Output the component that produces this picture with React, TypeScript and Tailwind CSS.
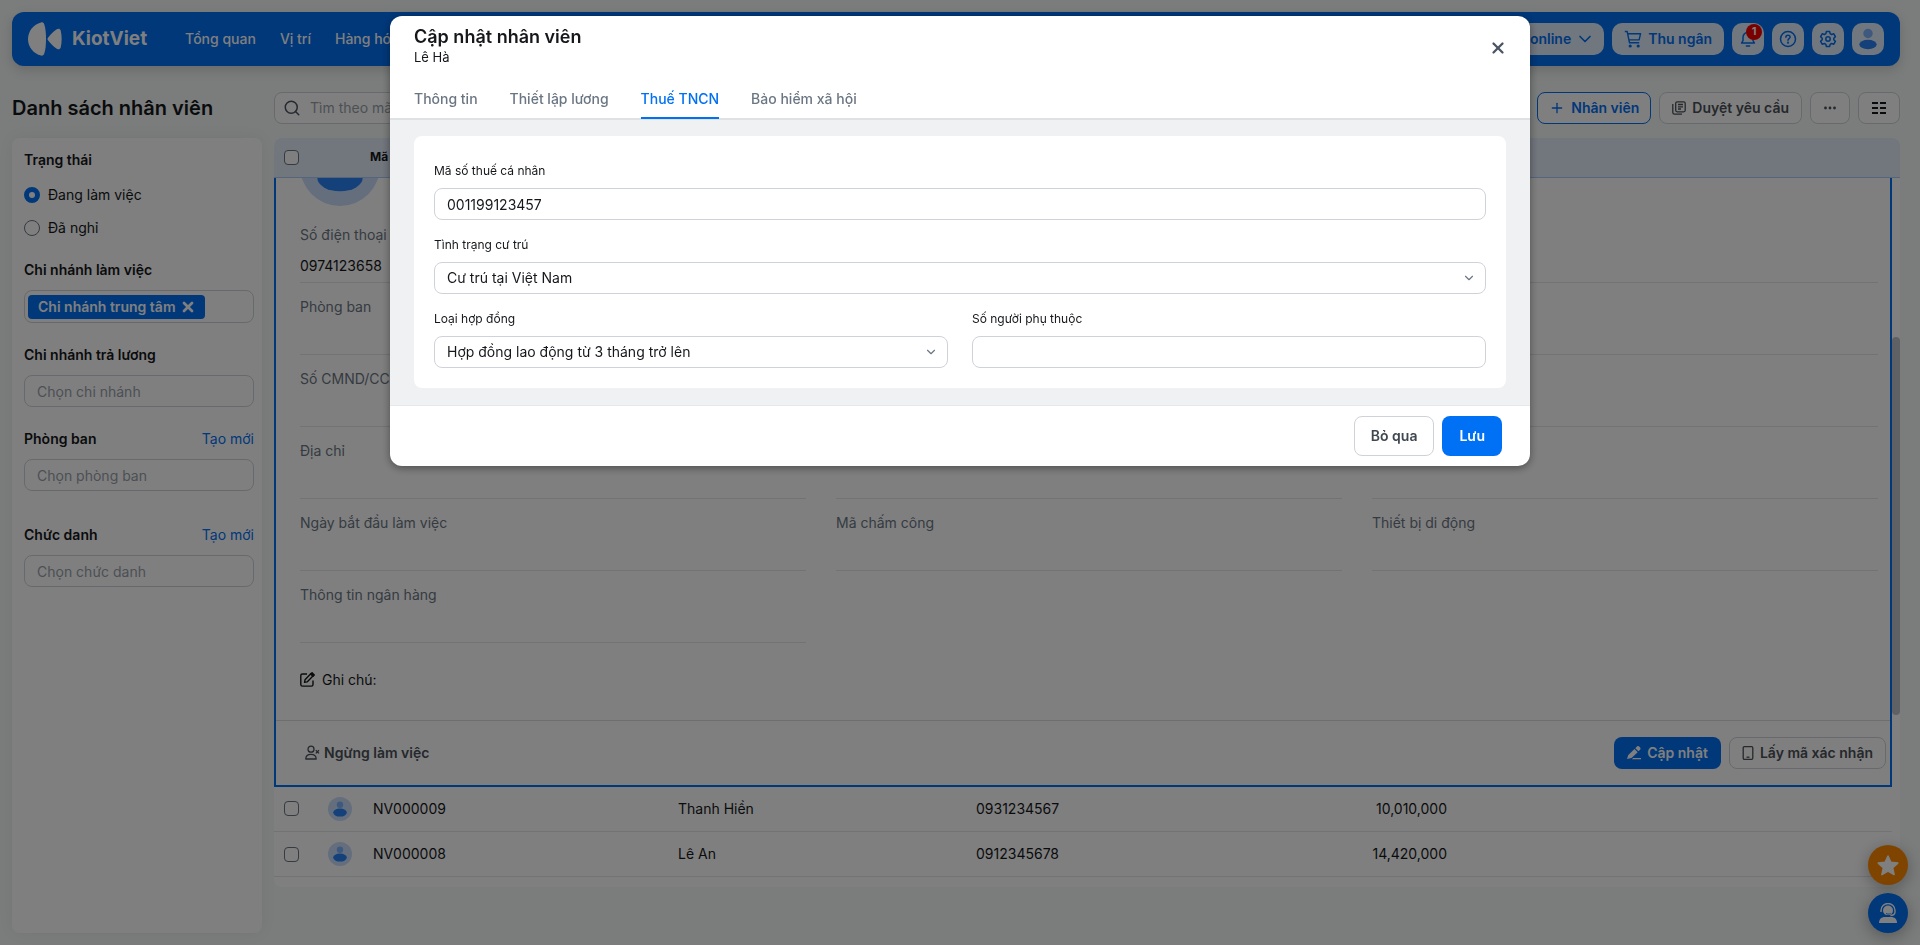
import React, { useState } from 'react';
import { Search, Plus, X, ChevronDown } from 'lucide-react';

interface Employee {
  id: string;
  name: string;
  phone: string;
  amount: string;
}

const EMPLOYEES: Employee[] = [
  { id: 'NV000009', name: 'Thanh Hiền', phone: '0931234567', amount: '10,010,000' },
  { id: 'NV000008', name: 'Lê An', phone: '0912345678', amount: '14,420,000' },
];

const NAV_ITEMS = ['Tổng quan', 'Vị trí', 'Hàng hóa'];
const TABS = ['Thông tin', 'Thiết lập lương', 'Thuế TNCN', 'Bảo hiểm xã hội'];

// Each row holds three cells, null leaves the cell out
const DETAIL_ROWS: ({ label: string; value?: string } | null)[][] = [
  [{ label: 'Số điện thoại', value: '0974123658' }, { label: '' }, { label: '' }],
  [{ label: 'Phòng ban' }, { label: '' }, { label: '' }],
  [{ label: 'Số CMND/CCCD' }, { label: '' }, { label: '' }],
  [{ label: 'Địa chỉ' }, { label: '' }, { label: '' }],
  [{ label: 'Ngày bắt đầu làm việc' }, { label: 'Mã chấm công' }, { label: 'Thiết bị di động' }],
  [{ label: 'Thông tin ngân hàng' }, null, null],
];

const Avatar: React.FC<{ className?: string }> = ({ className }) => (
  <svg viewBox="0 0 24 24" className={className} aria-hidden="true">
    <circle cx="12" cy="12" r="12" fill="#c9ddfb" />
    <circle cx="12" cy="7.8" r="3.2" fill="#7cb2fb" />
    <ellipse cx="12" cy="15.6" rx="6.8" ry="4" fill="#2a82f5" />
  </svg>
);

const Logo = () => (
  <div className="flex items-center gap-[10px] text-white">
    <svg viewBox="0 0 34 34" className="h-[34px] w-[34px]" fill="currentColor" aria-hidden="true">
      <path d="M13 .4C5.500 2.200 0 9 0 17s5.500 14.800 13 16.600c1.500.2 2.600-.3 3.200-1.800C17.500 28 18 23 18 17S17.500 6 16.200 2.200C15.600.7 14.500.2 13 .4Z" />
      <path d="M20.200 15.400c2.400-3.200 5.200-6 8.600-8.200 1.700-1 3.300-.6 3.900 1.200 1.300 5.800 1.300 11.400 0 17.200-.6 1.800-2.200 2.200-3.900 1.200-3.400-2.200-6.200-5-8.600-8.200-.9-1.300-.9-1.900 0-3.200Z" />
    </svg>
    <span className="text-[19px] font-bold">KiotViet</span>
  </div>
);

const CartIcon = () => (
  <svg viewBox="0 0 18 18" className="h-[18px] w-[18px]" fill="none" stroke="currentColor" strokeWidth="1.4" strokeLinejoin="round" aria-hidden="true">
    <path d="M.8 1.500h2.400l2.300 11.300h9.700M3.700 3.700h12.900l-1.500 6.200H5" />
    <circle cx="6.200" cy="16" r=".9" fill="currentColor" />
    <circle cx="14.200" cy="16" r=".9" fill="currentColor" />
  </svg>
);

const BellIcon = () => (
  <svg viewBox="0 0 18 18" className="h-[18px] w-[18px]" fill="none" stroke="currentColor" strokeWidth="1.500" strokeLinecap="round" strokeLinejoin="round" aria-hidden="true">
    <path d="M9 2.200a5 5 0 0 0-5 5v3.300l-1.400 2.600h12.800L14 10.500V7.200a5 5 0 0 0-5-5ZM7.400 16h3.200" />
  </svg>
);

const HelpIcon = () => (
  <svg viewBox="0 0 18 18" className="h-[18px] w-[18px]" fill="none" stroke="currentColor" strokeWidth="1.500" strokeLinecap="round" aria-hidden="true">
    <circle cx="9" cy="9" r="7.500" />
    <path d="M6.900 7.200c0-1.200.9-2 2.100-2s2.100.8 2.100 1.900c0 1.400-2.100 1.600-2.100 3.100" />
    <circle cx="9" cy="12.700" r=".4" fill="currentColor" />
  </svg>
);

const GearIcon = () => (
  <svg viewBox="0 0 18 18" className="h-[18px] w-[18px]" fill="none" stroke="currentColor" strokeWidth="1.500" strokeLinejoin="round" aria-hidden="true">
    <path d="M7.400 1.500h3.200l.6 2.200 1.300.8 2.300-.7 1.600 2.800-1.600 1.600v1.600l1.600 1.600-1.600 2.800-2.300-.7-1.300.8-.6 2.200H7.400l-.6-2.200-1.300-.8-2.300.7-1.600-2.800 1.600-1.600V8.200L1.600 6.600l1.600-2.800 2.300.7 1.300-.8Z" />
    <circle cx="9" cy="9" r="2.200" />
  </svg>
);

const RequestIcon = () => (
  <svg viewBox="0 0 14 14" className="h-[14px] w-[14px]" fill="none" stroke="currentColor" strokeWidth="1.300" strokeLinejoin="round" aria-hidden="true">
    <rect x="3.700" y=".8" width="9.500" height="10" rx="1.500" />
    <path d="M.8 3v8.500c0 1 .8 1.700 1.700 1.700H10M6 3.500h5M6 5.800h5M6 8h3" />
  </svg>
);

const NoteIcon = () => (
  <svg viewBox="0 0 15 15" className="h-[15px] w-[15px]" fill="none" stroke="currentColor" strokeWidth="1.400" strokeLinejoin="round" aria-hidden="true">
    <path d="M7 2H2.500C1.500 2 .8 2.700.8 3.600v8.800c0 1 .7 1.700 1.700 1.700h8.800c1 0 1.700-.7 1.700-1.700V8.500" />
    <path d="M5 7.800 11 1.500l2.200 2.200-6.100 6.200-2.600.5Z" />
    <path d="m10.600 2 1.500-1.300 2.200 2.200-1.400 1.400Z" fill="currentColor" />
  </svg>
);

const StopWorkIcon = () => (
  <svg viewBox="0 0 15 15" className="h-[15px] w-[15px]" fill="none" stroke="currentColor" strokeWidth="1.300" strokeLinejoin="round" aria-hidden="true">
    <circle cx="6" cy="4.200" r="3" />
    <path d="M.8 14c0-3.200 2-4.600 5.200-4.600s5.200 1.400 5.200 4.600ZM10.800 5.200l3.200 3.200M14 5.200l-3.200 3.200" />
  </svg>
);

const PencilIcon = () => (
  <svg viewBox="0 0 14 14" className="h-[14px] w-[14px]" fill="currentColor" aria-hidden="true">
    <path d="M8.300 2.200 10 .6c.7-.7 1.600-.6 2.200 0l.9.9c.6.6.6 1.500 0 2.200l-1.600 1.600ZM7.500 3l3.200 3.200-6.200 5.900-4.500 1 1.300-4.200ZM6 12h8v1.300H5Z" />
  </svg>
);

const PhoneIcon = () => (
  <svg viewBox="0 0 12 14" className="h-[14px] w-3" fill="none" stroke="currentColor" strokeWidth="1.300" aria-hidden="true">
    <rect x="1.200" y=".7" width="9.600" height="12.600" rx="1.200" />
    <path d="M4.500 11.200h3" />
  </svg>
);

const SupportIcon = () => (
  <svg viewBox="0 0 20 20" className="h-5 w-5" aria-hidden="true">
    <path d="M1 20c0-4 2.500-6 6-6h6c3.500 0 6 2 6 6Z" fill="white" />
    <circle cx="10" cy="7.500" r="5" fill="white" />
    <path d="M3 9V7.500a7 7 0 0 1 14 0V9c0 2.500-2 3.500-5 3.500" fill="none" stroke="white" strokeWidth="1.400" />
    <path d="M8 10.500c1.500.8 3 .8 4.500 0M8.500 12.500h4" fill="none" stroke="#0070f4" strokeWidth=".9" />
  </svg>
);

const checkboxClass =
  'block h-[15px] w-[15px] appearance-none rounded-[4px] border border-[#6b7683] bg-white checked:bg-[#0070f4]';
const headerButton =
  'relative flex h-8 items-center justify-center rounded-[10px] bg-[#e3eefd] text-sm font-semibold text-[#0070f4]';
const toolButton =
  'flex h-8 items-center justify-center gap-[6px] rounded-lg border border-[#cfd3d8] bg-white text-sm font-semibold text-[#4b5158]';
const modalField =
  'block h-8 w-full appearance-none rounded-lg border border-[#cfd2d8] bg-white px-3 text-sm text-[#15171a]';

const Header = () => (
  <header className="flex h-[54px] items-center justify-between rounded-xl bg-[#0070f4] px-4 shadow-[0_4px_12px_rgba(0,0,0,0.15)]">
    <div className="flex items-center gap-[38px]">
      <Logo />
      <nav className="flex gap-6">
        {NAV_ITEMS.map((item) => (
          <a key={item} href="#" className="text-sm font-medium text-white">
            {item}
          </a>
        ))}
      </nav>
    </div>
    <div className="flex gap-2">
      <button className={`${headerButton} gap-1 pr-[9px] pl-[14px]`}>
        Bán online
        <ChevronDown size={20} />
      </button>
      <button className={`${headerButton} gap-[6px] px-3`}>
        <CartIcon />
        Thu ngân
      </button>
      <button className={`${headerButton} w-8`} aria-label="Thông báo">
        <BellIcon />
        <span className="absolute top-px right-[2px] flex h-4 w-4 items-center justify-center rounded-full bg-[#f50000] text-[11px] font-bold text-white">
          1
        </span>
      </button>
      <button className={`${headerButton} w-8`} aria-label="Trợ giúp">
        <HelpIcon />
      </button>
      <button className={`${headerButton} w-8`} aria-label="Thiết lập">
        <GearIcon />
      </button>
      <button className={`${headerButton} w-8 overflow-hidden`} aria-label="Tài khoản">
        <svg viewBox="0 0 32 32" className="h-8 w-8" aria-hidden="true">
          <circle cx="16" cy="10.500" r="4.700" fill="#7cb2fb" />
          <ellipse cx="16" cy="21.500" rx="8.700" ry="4.700" fill="#2a82f5" />
        </svg>
      </button>
    </div>
  </header>
);

interface FilterProps {
  id: string;
  title: string;
  placeholder: string;
  canCreate?: boolean;
}

const Filter: React.FC<FilterProps> = ({ id, title, placeholder, canCreate }) => (
  <div>
    <div className="flex items-center justify-between text-sm leading-5">
      <label htmlFor={id} className="font-semibold text-[#15171a]">
        {title}
      </label>
      {canCreate && (
        <a href="#" className="text-[#0070f4]">
          Tạo mới
        </a>
      )}
    </div>
    <input
      id={id}
      placeholder={placeholder}
      className="mt-[10px] block h-8 w-full rounded-lg border border-[#cfd3d8] bg-white px-3 text-sm placeholder:text-[#98a1ab]"
    />
  </div>
);

const Sidebar = () => {
  const [status, setStatus] = useState('Đang làm việc');

  return (
    <aside className="flex w-[250px] shrink-0 flex-col rounded-lg bg-white pt-3 pr-2 pl-3 shadow-[0_0_16px_rgba(0,0,0,0.06)]">
      <fieldset>
        <legend className="text-sm leading-5 font-semibold text-[#15171a]">Trạng thái</legend>
        <div className="mt-[15px] flex flex-col gap-[13px]">
          {['Đang làm việc', 'Đã nghỉ'].map((item) => (
            <label key={item} className="flex items-center gap-2 text-sm leading-5 text-[#15171a]">
              <input
                type="radio"
                name="status"
                checked={status === item}
                onChange={() => setStatus(item)}
                className="h-4 w-4 appearance-none rounded-full border border-[#6b7683] checked:border-[5px] checked:border-[#0070f4]"
              />
              {item}
            </label>
          ))}
        </div>
      </fieldset>

      <div className="mt-[22px]">
        <h3 className="text-sm leading-5 font-semibold text-[#15171a]">Chi nhánh làm việc</h3>
        <div className="mt-[10px] flex h-[33px] items-center rounded-lg border border-[#cfd3d8] px-[3px]">
          <span className="flex h-6 items-center gap-1 rounded bg-[#0070f4] pr-[9px] pl-[10px] text-sm font-semibold text-white">
            Chi nhánh trung tâm
            <button aria-label="Xóa chi nhánh">
              <X size={16} strokeWidth={4} />
            </button>
          </span>
        </div>
      </div>

      <div className="mt-[22px]">
        <Filter id="pay-branch" title="Chi nhánh trả lương" placeholder="Chọn chi nhánh" />
      </div>
      <div className="mt-[22px]">
        <Filter id="department" title="Phòng ban" placeholder="Chọn phòng ban" canCreate />
      </div>
      <div className="mt-[34px]">
        <Filter id="position" title="Chức danh" placeholder="Chọn chức danh" canCreate />
      </div>
    </aside>
  );
};

const EmployeeDetail = () => (
  <div className="overflow-hidden border-2 border-t-0 border-[#0070f4] bg-white">
    {/* Scrolled profile block, only the lower edge of the avatar shows */}
    <div className="flex h-7 items-end overflow-hidden pl-6">
      <Avatar className="h-20 w-20 shrink-0" />
    </div>
    <div className="pt-[5px] pr-3 pl-6">
      {DETAIL_ROWS.map((row, index) => (
        <dl key={index} className="grid grid-cols-3 gap-x-[30px]">
          {row.map((cell, column) =>
            cell ? (
              <div key={column} className="h-[72px] border-b border-[#e4e6e9] pt-[14px] text-sm leading-5">
                <dt className="h-5 text-[#6b7683]">{cell.label}</dt>
                {cell.value && <dd className="mt-[11px] text-[#15171a]">{cell.value}</dd>}
              </div>
            ) : (
              <div key={column} />
            )
          )}
        </dl>
      ))}
      <p className="flex items-center gap-[7px] pt-[27px] pb-[30px] text-sm leading-5 text-[#15171a]">
        <NoteIcon />
        Ghi chú:
      </p>
    </div>
    <div className="flex h-[65px] items-center justify-between border-t border-[#d9dce0] pr-1 pl-[29px]">
      <button className="flex items-center gap-1 text-sm font-semibold text-[#4b5158]">
        <StopWorkIcon />
        Ngừng làm việc
      </button>
      <div className="flex gap-2">
        <button className="flex h-8 items-center gap-[6px] rounded-lg bg-[#0070f4] px-[13px] text-sm font-semibold text-white">
          <PencilIcon />
          Cập nhật
        </button>
        <button className={`${toolButton} px-3`}>
          <PhoneIcon />
          Lấy mã xác nhận
        </button>
      </div>
    </div>
  </div>
);

const EmployeeTable = () => (
  <div className="relative overflow-hidden rounded-lg bg-white pb-[10px]">
    <table className="w-full table-fixed border-collapse text-left text-sm text-[#15171a]">
      <colgroup>
        <col className="w-[44px]" />
        <col className="w-[45px]" />
        <col className="w-[305px]" />
        <col className="w-[298px]" />
        <col className="w-[298px]" />
        <col className="w-[193px]" />
        <col />
        <col className="w-2" />
      </colgroup>
      <thead>
        <tr className="h-[39px] border-b border-[#a9cbfa] bg-[#e4ecfb] text-xs">
          <th className="pl-[10px]">
            <input type="checkbox" aria-label="Chọn tất cả" className={checkboxClass} />
          </th>
          <th />
          <th className="pl-[7px] font-bold">Mã nhân viên</th>
          <th className="pl-[10px] font-bold">Tên nhân viên</th>
          <th className="pl-[10px] font-bold">Số điện thoại</th>
          <th />
          <th />
          <th />
        </tr>
      </thead>
      <tbody>
        <tr>
          <td colSpan={7}>
            <EmployeeDetail />
          </td>
          <td />
        </tr>
        {EMPLOYEES.map((employee) => (
          <tr key={employee.id} className="h-[45px] *:border-b *:border-[#e4e6e9] *:last:border-b-0">
            <td className="pl-[10px]">
              <input type="checkbox" aria-label={employee.id} className={checkboxClass} />
            </td>
            <td className="pl-[10px]">
              <Avatar className="h-6 w-6" />
            </td>
            <td className="pl-[10px]">{employee.id}</td>
            <td className="pl-[10px]">{employee.name}</td>
            <td className="pl-[10px]">{employee.phone}</td>
            <td className="pr-[10px] text-right">{employee.amount}</td>
            <td />
            <td />
          </tr>
        ))}
      </tbody>
    </table>
    <div className="absolute top-[199px] right-0 h-[378px] w-2 rounded-full bg-[#c1c2ca]" />
  </div>
);

const EditModal = () => {
  const [activeTab, setActiveTab] = useState('Thuế TNCN');

  return (
    <div
      role="dialog"
      aria-label="Cập nhật nhân viên"
      className="w-[1140px] max-w-full overflow-hidden rounded-xl bg-white shadow-[0_2px_8px_rgba(0,0,0,0.4)]"
    >
      <div className="flex justify-between px-6">
        <div className="pt-[9px]">
          <h2 className="text-lg leading-6 font-semibold text-[#15171a]">Cập nhật nhân viên</h2>
          <p className="text-[13px] leading-4 text-[#15171a]">Lê Hà</p>
        </div>
        <button aria-label="Đóng" className="mt-6 flex h-4 w-4 items-center justify-center text-[#4b5563]">
          <X size={18} strokeWidth={3} className="shrink-0" />
        </button>
      </div>
      <div className="mt-[15px] flex h-10 gap-8 border-b-2 border-[#dfe2e5] px-6">
        {TABS.map((tab) => (
          <button
            key={tab}
            onClick={() => setActiveTab(tab)}
            className={`h-[39px] border-b-2 text-sm font-medium ${
              activeTab === tab ? 'border-[#0070f4] text-[#0070f4]' : 'border-transparent text-[#6b7683]'
            }`}
          >
            {tab}
          </button>
        ))}
      </div>

      <div className="border-b border-[#e6e8ea] bg-[#eff1f3] px-6 pt-4 pb-[17px]">
        <div className="grid grid-cols-2 gap-x-6 gap-y-4 rounded-lg bg-white p-5 pt-[26px]">
          <div className="col-span-2">
            <label htmlFor="tax-code" className="block pb-[9px] text-xs leading-[17px] text-[#15171a]">
              Mã số thuế cá nhân
            </label>
            <input id="tax-code" defaultValue="001199123457" className={modalField} />
          </div>
          <div className="relative col-span-2">
            <label htmlFor="residence" className="block pb-[9px] text-xs leading-[17px] text-[#15171a]">
              Tình trạng cư trú
            </label>
            <select id="residence" className={modalField}>
              <option>Cư trú tại Việt Nam</option>
            </select>
            <ChevronDown size={14} className="pointer-events-none absolute right-[10px] bottom-[9px] text-[#6b7683]" />
          </div>
          <div className="relative">
            <label htmlFor="contract" className="block pb-[9px] text-xs leading-[17px] text-[#15171a]">
              Loại hợp đồng
            </label>
            <select id="contract" className={modalField}>
              <option>Hợp đồng lao động từ 3 tháng trở lên</option>
            </select>
            <ChevronDown size={14} className="pointer-events-none absolute right-[10px] bottom-[9px] text-[#6b7683]" />
          </div>
          <div>
            <label htmlFor="dependents" className="block pb-[9px] text-xs leading-[17px] text-[#15171a]">
              Số người phụ thuộc
            </label>
            <input id="dependents" className={modalField} />
          </div>
        </div>
      </div>

      <div className="flex justify-end gap-2 py-[10px] pr-7">
        <button className="h-10 rounded-lg border border-[#cfd2d8] px-4 text-sm font-semibold text-[#3f474f]">
          Bỏ qua
        </button>
        <button className="h-10 rounded-lg bg-[#0070f4] px-[17px] text-sm font-semibold text-white">Lưu</button>
      </div>
    </div>
  );
};

const App = () => {
  return (
    <div className="flex min-h-screen flex-col bg-[#f6f9f8] py-3 pr-5 pl-3 font-['Inter',sans-serif]">
      <Header />

      <div className="mt-[26px] flex h-8 items-center">
        <h1 className="w-[262px] text-xl font-semibold text-[#15171a]">Danh sách nhân viên</h1>
        <div className="flex h-8 w-[420px] items-center gap-[9px] rounded-lg border border-[#cfd3d8] bg-white px-2">
          <Search size={18} className="shrink-0 text-[#4b5563]" />
          <input
            aria-label="Tìm nhân viên"
            placeholder="Tìm theo mã, tên nhân viên"
            className="w-full text-sm outline-none placeholder:text-[#98a1ab]"
          />
        </div>
        <div className="ml-auto flex gap-2">
          <button className="flex h-8 items-center gap-[6px] rounded-lg border border-[#0070f4] bg-white px-[11px] text-sm font-semibold text-[#0070f4]">
            <Plus size={16} />
            Nhân viên
          </button>
          <button className={`${toolButton} px-3`}>
            <RequestIcon />
            Duyệt yêu cầu
          </button>
          <button className={`${toolButton} w-10`} aria-label="Thêm">
            <svg viewBox="0 0 12 4" className="h-1 w-3" fill="currentColor" aria-hidden="true">
              <circle cx="1.500" cy="2" r="1.400" />
              <circle cx="6" cy="2" r="1.400" />
              <circle cx="10.500" cy="2" r="1.400" />
            </svg>
          </button>
          <button className={`${toolButton} w-[42px]`} aria-label="Cột hiển thị">
            <svg viewBox="0 0 14 12" className="h-3 w-[14px]" stroke="#15171a" strokeWidth="2" aria-hidden="true">
              <path d="M0 1h6M8 1h6M0 6h6M8 6h6M0 11h6M8 11h6" />
            </svg>
          </button>
        </div>
      </div>

      <div className="mt-[14px] flex flex-1 gap-3">
        <Sidebar />
        <main className="min-w-0 flex-1">
          <EmployeeTable />
        </main>
      </div>

      <div className="fixed right-3 bottom-3 flex flex-col gap-2">
        <button
          aria-label="Đánh giá"
          className="flex h-10 w-10 items-center justify-center rounded-full bg-[#ff8800] shadow-[0_4px_16px_rgba(0,0,0,0.3)]"
        >
          <svg viewBox="0 0 22 21" className="h-[21px] w-[22px]" fill="white" stroke="white" strokeWidth="1.500" strokeLinejoin="round" aria-hidden="true">
            <path d="m11 1 2.900 6.300 6.900.8-5.100 4.700 1.400 6.800L11 16.200l-6.100 3.400 1.400-6.800L1.200 8.100l6.900-.8Z" />
          </svg>
        </button>
        <button
          aria-label="Hỗ trợ"
          className="flex h-10 w-10 items-center justify-center rounded-full bg-[#0070f4] shadow-[0_4px_16px_rgba(0,0,0,0.3)]"
        >
          <SupportIcon />
        </button>
      </div>

      <div className="fixed inset-0 flex items-start justify-center bg-black/50 pt-4">
        <EditModal />
      </div>
    </div>
  );
};

export default App;
